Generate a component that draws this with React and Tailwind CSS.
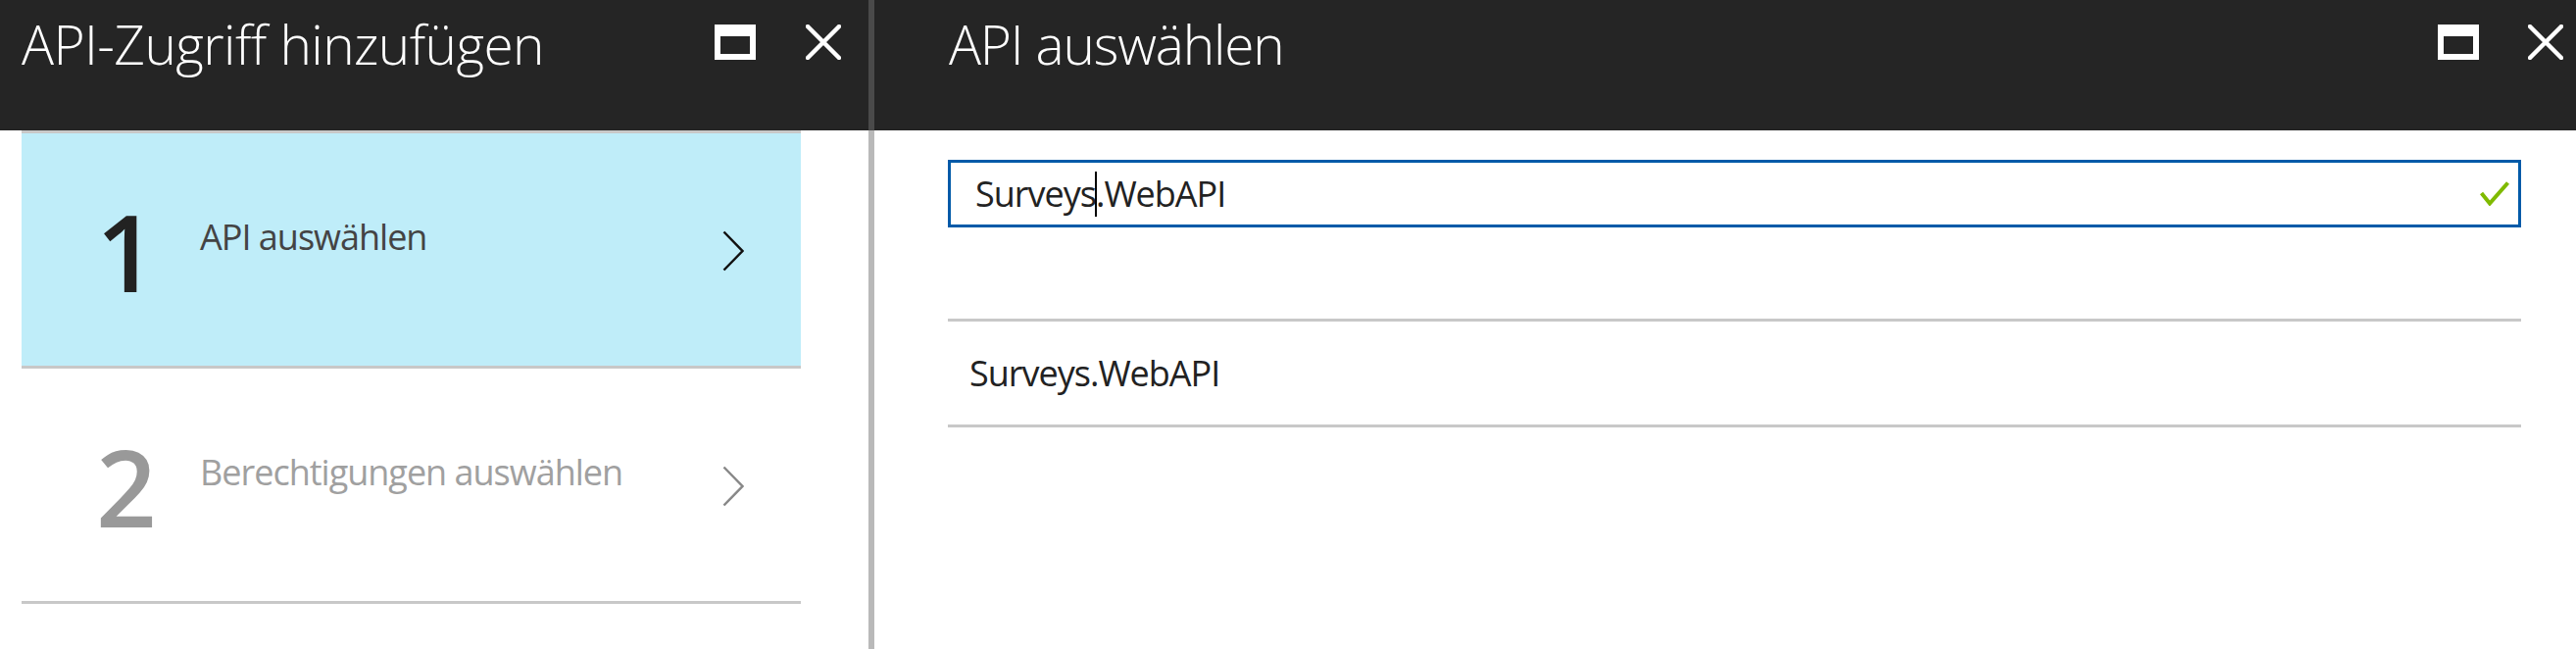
import { useState } from 'react';

const MaximizeIcon = () => (
  <div className="w-[42px] h-[36px] border-white border-x-[6px] border-b-[6px] border-t-[12px]" />
);

const CloseIcon = () => (
  <svg width="36" height="36" viewBox="0 0 36 36" className="block">
    <path d="M2 2 L34 34 M34 2 L2 34" stroke="#fff" strokeWidth="4.5" strokeLinecap="round" />
  </svg>
);

const Chevron = ({ color }) => (
  <svg width="22" height="42" viewBox="0 0 22 42" className="block">
    <polyline points="1.5,1.5 20.5,21 1.5,40.5" fill="none" stroke={color} strokeWidth="2.5" />
  </svg>
);

const CheckIcon = () => (
  <svg width="30" height="25" viewBox="0 0 30 25" className="block">
    <polyline points="1.5,12 10,22.5 28.5,1.5" fill="none" stroke="#7fba00" strokeWidth="4" />
  </svg>
);

const steps = [
  { num: '1', label: 'API auswählen', active: true },
  { num: '2', label: 'Berechtigungen auswählen', active: false },
];

const App = () => {
  const [query] = useState('Surveys.WebAPI');

  return (
    <div className="w-[2628px] h-[662px] flex bg-white overflow-hidden font-['Open_Sans','Noto_Sans',sans-serif]">
      {/* Left blade */}
      <div className="w-[886px] flex flex-col">
        <div className="h-[133px] bg-[#252525] flex items-start justify-between pl-[22px] pr-[28px]">
          <h1 className="mt-[17px] text-[55px] leading-none font-light text-white tracking-[-0.6px]">
            API-Zugriff hinzufügen
          </h1>
          <div className="flex items-center gap-[51px] mt-[25px]">
            <MaximizeIcon />
            <CloseIcon />
          </div>
        </div>

        <div className="pl-[22px] w-[817px]">
          <ul className="border-t-[3px] border-[#c8c8c8]">
            {steps.map((s) => (
              <li
                key={s.num}
                className={`h-[240px] border-b-[3px] border-[#c8c8c8] flex items-start ${s.active ? 'bg-[#bfedf9]' : 'bg-white'}`}
              >
                <span
                  className={`w-[182px] pl-[76px] mt-[67px] text-[108px] leading-none font-semibold tracking-[-4px] ${s.active ? 'text-[#222]' : 'text-[#999]'}`}
                >
                  {s.num}
                </span>
                <span
                  className={`flex-1 mt-[88px] text-[36px] leading-none tracking-[-1px] ${s.active ? 'text-[#444]' : 'text-[#a0a0a0]'}`}
                >
                  {s.label}
                </span>
                <span className="mt-[99px] mr-[58px]">
                  <Chevron color={s.active ? '#111' : '#888'} />
                </span>
              </li>
            ))}
          </ul>
        </div>
      </div>

      {/* Divider */}
      <div className="w-[6px] flex flex-col">
        <div className="h-[133px] bg-[#4a4a4a]" />
        <div className="flex-1 bg-[#b9b9b9]" />
      </div>

      {/* Right blade */}
      <div className="flex-1 flex flex-col">
        <div className="h-[133px] bg-[#252525] flex items-start justify-between pl-[76px] pr-[13px]">
          <h1 className="mt-[17px] text-[55px] leading-none font-light text-white tracking-[-1.2px]">
            API auswählen
          </h1>
          <div className="flex items-center gap-[50px] mt-[25px]">
            <MaximizeIcon />
            <CloseIcon />
          </div>
        </div>

        <div className="pl-[75px] pr-[56px] pt-[30px]">
          <div className="h-[69px] border-[3px] border-[#005aa8] flex items-center pl-[25px] pr-[9px]">
            <span className="flex-1 text-[36px] leading-none text-[#222] tracking-[-1px] flex items-center">
              Surveys
              <span className="inline-block w-[2px] h-[46px] bg-black mx-[-1px]" />
              .WebAPI
            </span>
            <CheckIcon />
          </div>

          <div className="mt-[93px] border-t-[3px] border-b-[3px] border-[#c8c8c8] h-[111px] flex items-center pl-[22px]">
            <span className="text-[36px] leading-none text-[#222] tracking-[-1px]">{query}</span>
          </div>
        </div>
      </div>
    </div>
  );
};

export default App;
